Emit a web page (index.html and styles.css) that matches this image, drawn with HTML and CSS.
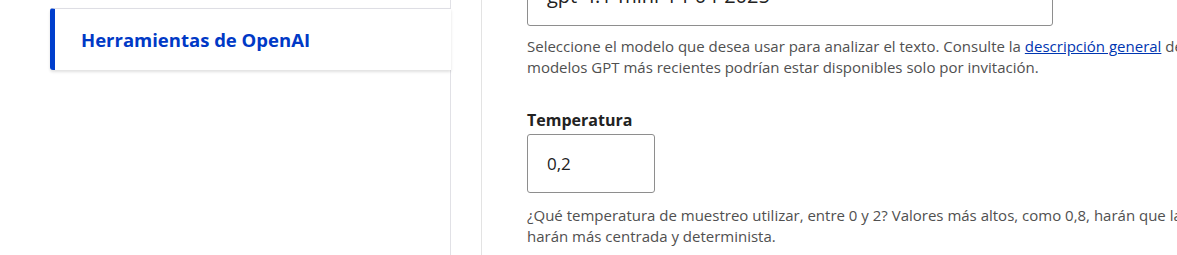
FILE: index.html
```html
<!DOCTYPE html>
<html lang="es">
<head>
<meta charset="utf-8">
<link rel="stylesheet" href="styles.css">
</head>
<body>
<div class="page">
  <aside class="sidebar">
    <div class="card card-prev"></div>
    <a class="card card-active" href="#">Herramientas de OpenAI</a>
    <div class="rest"></div>
  </aside>
  <main class="panel">
    <div class="select">
      <span class="select-text">gpt-4.1-mini-14-04-2025</span>
      <svg class="chevron" width="14" height="10" viewBox="0 0 14 10"><path d="M1 1 L7 7 L13 1" fill="none" stroke="#555" stroke-width="1.5"/></svg>
    </div>
    <p class="desc">Seleccione el modelo que desea usar para analizar el texto. Consulte la <a href="#">descripción general</a> de los modelos para obtener más información. Tenga en cuenta que algunos<br>modelos GPT más recientes podrían estar disponibles solo por invitación.</p>
    <label class="label">Temperatura</label>
    <div class="input">0,2</div>
    <p class="desc">¿Qué temperatura de muestreo utilizar, entre 0 y 2? Valores más altos, como 0,8, harán que la salida sea más aleatoria, mientras que valores más bajos, como 0,2, la<br>harán más centrada y determinista.</p>
  </main>
</div>
</body>
</html>
```
FILE: styles.css
```css
html, body {
  margin: 0;
  padding: 0;
  background: #fff;
  overflow: hidden;
  height: 255px;
}
body {
  font-family: "Open Sans", "Liberation Sans", sans-serif;
  color: #222;
}
.page {
  display: flex;
  height: 255px;
}
.sidebar {
  width: 401px;
  padding-left: 50px;
  flex: none;
  display: flex;
  flex-direction: column;
}
.card {
  background: #fff;
  box-sizing: border-box;
}
.card-prev {
  height: 8px;
  border-right: 1px solid #e1e1e6;
}
.card-active {
  display: flex;
  align-items: center;
  height: 62px;
  padding-left: 26px;
  border-top: 1px solid #dedee4;
  border-left: 5px solid #003ecc;
  border-radius: 3px 0 0 3px;
  box-shadow: 0 2px 3px rgba(0, 0, 0, 0.12);
  color: #0039c6;
  font-weight: 700;
  font-size: 18.5px;
  text-decoration: none;
  position: relative;
  z-index: 1;
}
.rest {
  flex: 1;
  border-right: 1px solid #e1e1e6;
}
.panel {
  flex: 1;
  margin-left: 30px;
  border-left: 1px solid #e3e3e3;
  padding-left: 45px;
  min-width: 0;
  white-space: nowrap;
}
.select {
  box-sizing: border-box;
  width: 526px;
  height: 50px;
  margin-top: -24px;
  border: 1px solid #8e8e8e;
  border-radius: 3px;
  padding: 9px 0 0 19px;
  display: flex;
  justify-content: space-between;
  padding-right: 22px;
}
.select-text {
  font-size: 20px;
  line-height: 20px;
  color: #222;
}
.chevron {
  margin-top: 2px;
}
.desc {
  margin: 10px 0 0;
  font-size: 15px;
  line-height: 21px;
  color: #505050;
}
.desc a {
  color: #0036b1;
}
.label {
  display: block;
  margin-top: 31px;
  font-size: 16px;
  line-height: 22px;
  font-weight: 700;
  color: #222;
}
.input {
  box-sizing: border-box;
  width: 128px;
  height: 59px;
  margin-top: 3px;
  border: 1px solid #8e8e8e;
  border-radius: 3px;
  padding-left: 19px;
  display: flex;
  align-items: center;
  font-size: 17px;
  color: #222;
}
.input + .desc {
  margin-top: 12px;
}
```
